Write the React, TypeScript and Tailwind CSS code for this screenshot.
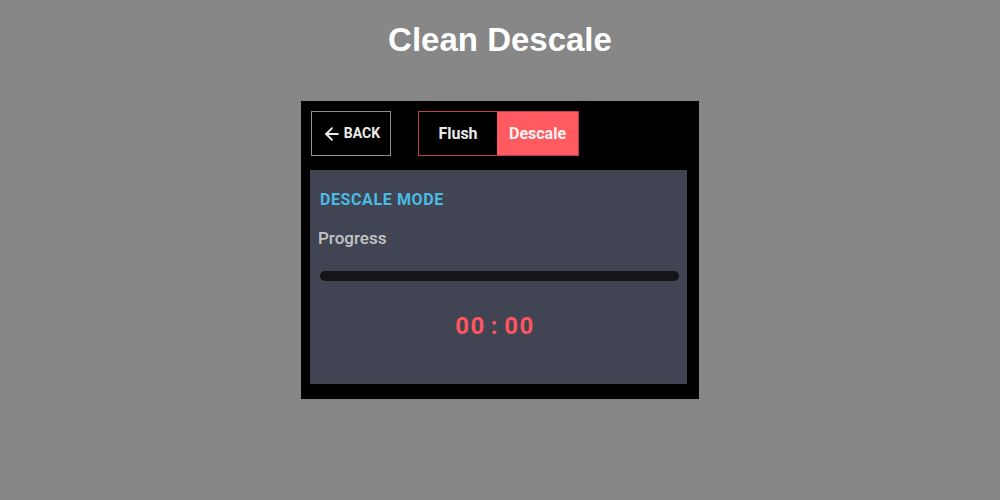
import { ArrowLeft } from 'lucide-react';

export default function App() {
  return (
    <div className="w-[1000px] h-[500px] bg-[#878787] flex flex-col items-center" style={{ fontFamily: 'Roboto, sans-serif' }}>
      <h1 className="mt-[20px] text-[33px] leading-[40px] font-bold text-white" style={{ fontFamily: '"Liberation Sans", Arial, sans-serif' }}>
        Clean Descale
      </h1>
      <div className="mt-[41px] w-[398px] h-[298px] bg-black pl-[9px] pr-[12px] pt-[10px] pb-[15px] flex flex-col">
        <div className="flex items-center h-[45px]">
          <button className="ml-[1px] h-[45px] w-[80px] border border-[#8f8f8f] text-[#ececec] flex items-center justify-center gap-[2px] text-[14px] font-bold">
            <ArrowLeft size={20} strokeWidth={2.3} />
            BACK
          </button>
          <div className="ml-[27px] flex h-[45px] border border-[#b8404c]">
            <div className="w-[78px] flex items-center justify-center text-[#e8e8e8] text-[16px] font-bold">Flush</div>
            <div className="w-[81px] flex items-center justify-center bg-[#ff5a5f] text-[#f4f4f4] text-[16px] font-bold">Descale</div>
          </div>
        </div>
        <div className="mt-[14px] flex-1 bg-[#414453] pl-[10px] pr-[8px] flex flex-col">
          <div className="mt-[20px] text-[16px] leading-[20px] font-bold text-[#4bbbe6] tracking-[0.6px]">DESCALE MODE</div>
          <div className="mt-[18px] -ml-[2px] text-[17px] leading-[20px] font-medium text-[#c4c4c6]">Progress</div>
          <div className="mt-[23px] h-[10px] rounded-full bg-[#131516]" />
          <div className="mt-[30px] pr-[9px] flex justify-center text-[24px] leading-[30px] font-bold text-[#ff5560] tracking-[1.5px]">
            <span>00</span>
            <span className="mx-[5px]">:</span>
            <span>00</span>
          </div>
        </div>
      </div>
    </div>
  );
}
